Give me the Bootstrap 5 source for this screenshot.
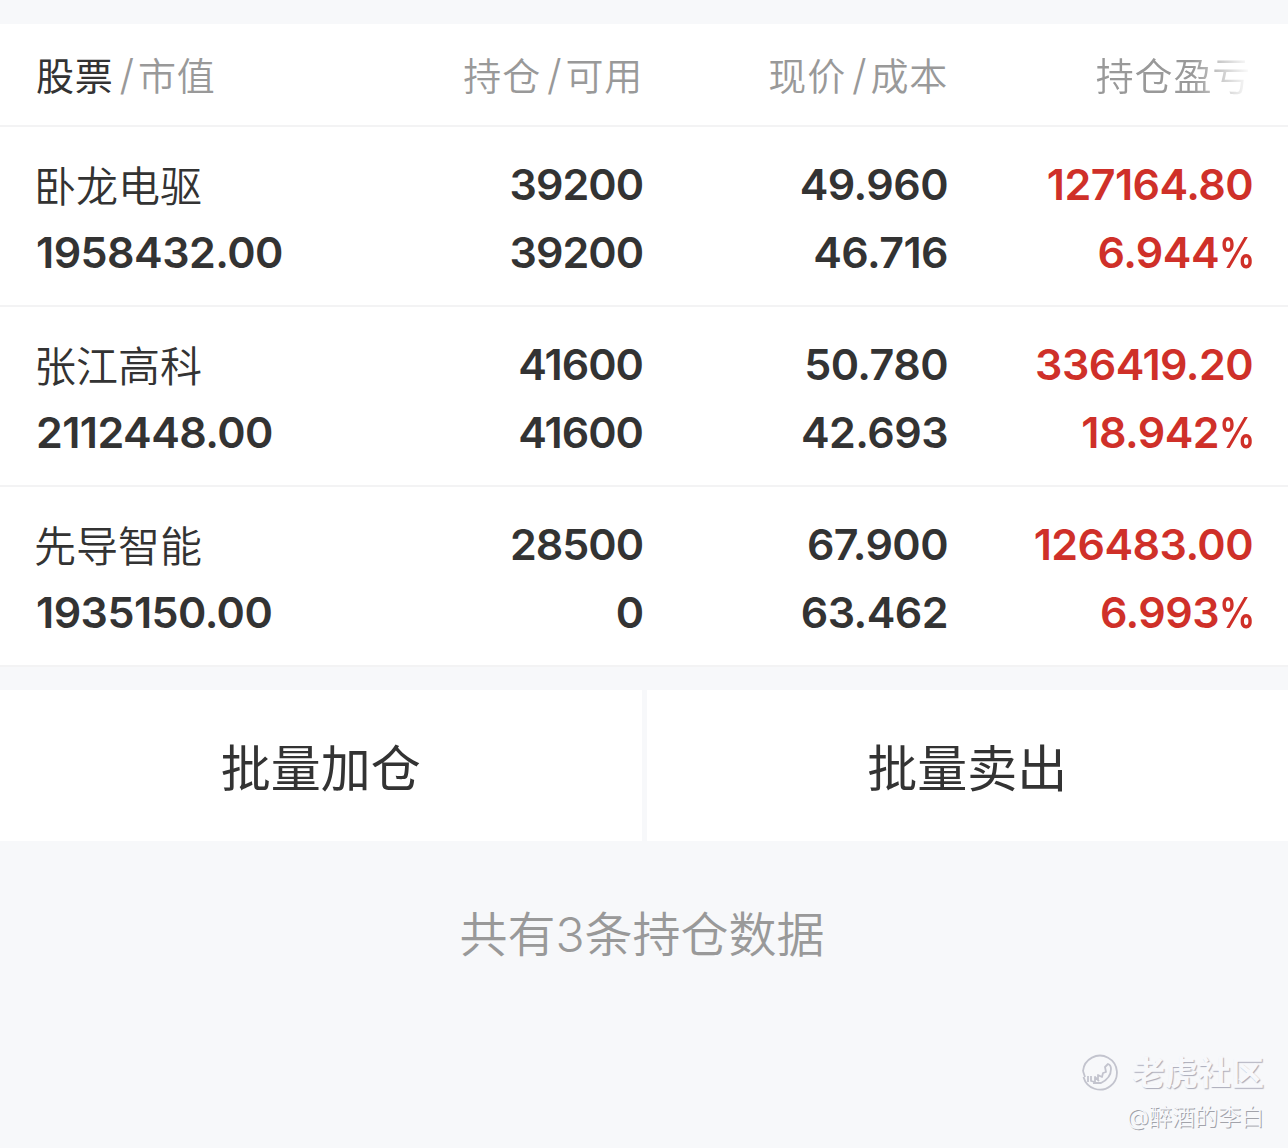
<!DOCTYPE html>
<html lang="zh-CN">
<head>
    <meta charset="UTF-8">
    <meta name="viewport" content="width=device-width, initial-scale=1.0">
    <title>持仓</title>
    <link rel="stylesheet"
        href="https://cdn.jsdelivr.net/npm/bootstrap@5.3.3/dist/css/bootstrap.min.css">
    <style>
        body {
            background: #f7f8fa;
            color: #333;
            font-family: Inter, "Noto Sans CJK SC", sans-serif;
            min-height: 1148px;
        }

        .holding-grid {
            display: grid;
            grid-template-columns: 301px repeat(3, 305px);
            padding: 0 36px;
            border-bottom: 2px solid #f3f3f4;
        }

        .holding-head {
            height: 103px;
            padding-top: 1px;
            font-size: 38px;
            line-height: 102px;
            letter-spacing: .8px;
            color: #999;
            font-weight: 350;
        }

        .holding-head .sep {
            margin: 0 3px 0 6px;
            font-size: 42px;
            line-height: 1;
            font-weight: 300;
        }

        .holding-head .active-sort {
            color: #333;
            font-weight: 400;
        }

        .head-pair {
            margin-right: -1px;
        }

        .fade-label {
            margin-right: 1px;
            -webkit-mask-image: linear-gradient(to right, #000 62%, transparent);
            mask-image: linear-gradient(to right, #000 62%, transparent);
        }

        .holding-item {
            height: 180px;
            padding-top: 23px;
            font-size: 43px;
            line-height: 68px;
            letter-spacing: -.55px;
            font-weight: 600;
        }

        .holding-item > .text-end {
            margin-right: -1px;
        }

        .stock-name {
            margin-left: -2px;
            padding-top: 6px;
            font-size: 42px;
            line-height: 62px;
            letter-spacing: 0;
            font-weight: 350;
        }

        .quantity {
            letter-spacing: -1px;
        }

        .profit {
            color: #cf3029;
        }

        .pct {
            display: inline-block;
            width: 34px;
            transform: scaleX(.84);
            transform-origin: left;
            text-align: left;
        }

        .batch-bar {
            margin-top: 23px;
            gap: 5px;
        }

        .batch-btn {
            height: 151px;
            padding-top: 14px;
            font-size: 50px;
            color: #333;
        }

        .total-line {
            margin-top: 58px;
            padding-right: 4px;
            font-size: 48px;
            line-height: 72px;
            color: #999;
            font-weight: 350;
        }

        .watermark {
            right: 24px;
            bottom: 9px;
            color: #f7f8fb;
        }

        .watermark-brand {
            gap: 13px;
            font-size: 33px;
            line-height: 44px;
            font-weight: 700;
            text-shadow: 1px 1px 1px #a9aab8;
        }

        .watermark-user {
            font-size: 23px;
            line-height: 44px;
            font-weight: 350;
            text-shadow: 1px 1px 0 #a2a3aa;
        }
    </style>
</head>

<body>
    <div class="bg-white mt-4">
        <div class="holding-grid holding-head text-end">
            <div class="text-start"><span class="active-sort">股票</span><span class="sep">/</span>市值</div>
            <div class="head-pair">持仓<span class="sep">/</span>可用</div>
            <div class="head-pair">现价<span class="sep">/</span>成本</div>
            <div><span class="fade-label">持仓盈亏</span></div>
        </div>

        <div class="holding-grid holding-item">
            <div class="text-start"><div class="stock-name">卧龙电驱</div><div>1958432.00</div></div>
            <div class="text-end quantity"><div>39200</div><div>39200</div></div>
            <div class="text-end"><div>49.960</div><div>46.716</div></div>
            <div class="text-end profit"><div>127164.80</div><div>6.944<span class="pct">%</span></div></div>
        </div>

        <div class="holding-grid holding-item">
            <div class="text-start"><div class="stock-name">张江高科</div><div>2112448.00</div></div>
            <div class="text-end quantity"><div>41600</div><div>41600</div></div>
            <div class="text-end"><div>50.780</div><div>42.693</div></div>
            <div class="text-end profit"><div>336419.20</div><div>18.942<span class="pct">%</span></div></div>
        </div>

        <div class="holding-grid holding-item">
            <div class="text-start"><div class="stock-name">先导智能</div><div>1935150.00</div></div>
            <div class="text-end quantity"><div>28500</div><div>0</div></div>
            <div class="text-end"><div>67.900</div><div>63.462</div></div>
            <div class="text-end profit"><div>126483.00</div><div>6.993<span class="pct">%</span></div></div>
        </div>
    </div>

    <div class="d-flex batch-bar">
        <button type="button" class="btn bg-white border-0 rounded-0 flex-fill batch-btn">批量加仓</button>
        <button type="button" class="btn bg-white border-0 rounded-0 flex-fill batch-btn">批量卖出</button>
    </div>

    <div class="text-center total-line">共有3条持仓数据</div>

    <div class="position-absolute watermark text-end">
        <div class="d-flex align-items-center justify-content-end watermark-brand">
            <svg width="38" height="38" viewBox="0 0 38 38" fill="none" stroke="#c3c4ce" stroke-width="1.8">
                <path d="M2.5 23A17 17 0 1 0 2 17"/>
                <path d="M2 17l2 6M7 22v6M10 22v5l4 1v-5l4 4M12 29h8q10-5 10-14 0-4-3-5l-3 3 1 5-3 1-1 4-4-2v5" stroke-linejoin="round"/>
            </svg>
            <span>老虎社区</span>
        </div>
        <div class="watermark-user">@醉酒的李白</div>
    </div>

    <script src="https://cdn.jsdelivr.net/npm/bootstrap@5.3.3/dist/js/bootstrap.bundle.min.js"></script>
</body>
</html>
